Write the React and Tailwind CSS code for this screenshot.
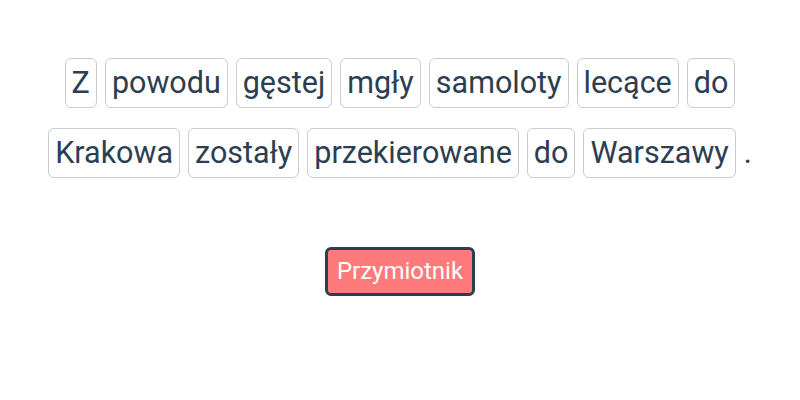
import React from 'react';

const words = ['Z', 'powodu', 'gęstej', 'mgły', 'samoloty', 'lecące', 'do', 'Krakowa', 'zostały', 'przekierowane', 'do', 'Warszawy'];

function App() {
    return (
        <div className="min-h-screen bg-white text-[#2c3e50]" style={{ fontFamily: 'Roboto, sans-serif' }}>
            <div className="pt-[58px] flex flex-col items-center">
                {/* Sentence words */}
                <div className="w-[740px] flex flex-wrap justify-center items-center gap-x-2 gap-y-5">
                    {words.map((w, i) => (
                        <span key={i} className="border border-[#c8cdd2] rounded-md px-[6px] py-[6px] text-[30.5px] leading-[36px]">
                            {w}
                        </span>
                    ))}
                    <span className="text-[30.5px] leading-[36px]">.</span>
                </div>
                <button className="mt-[69px] bg-[#ff7b7b] text-white border-[3px] border-[#2c3e50] rounded-md px-[9px] py-[7px] text-[24px] leading-[29px]">
                    Przymiotnik
                </button>
            </div>
        </div>
    );
}

export default App;
